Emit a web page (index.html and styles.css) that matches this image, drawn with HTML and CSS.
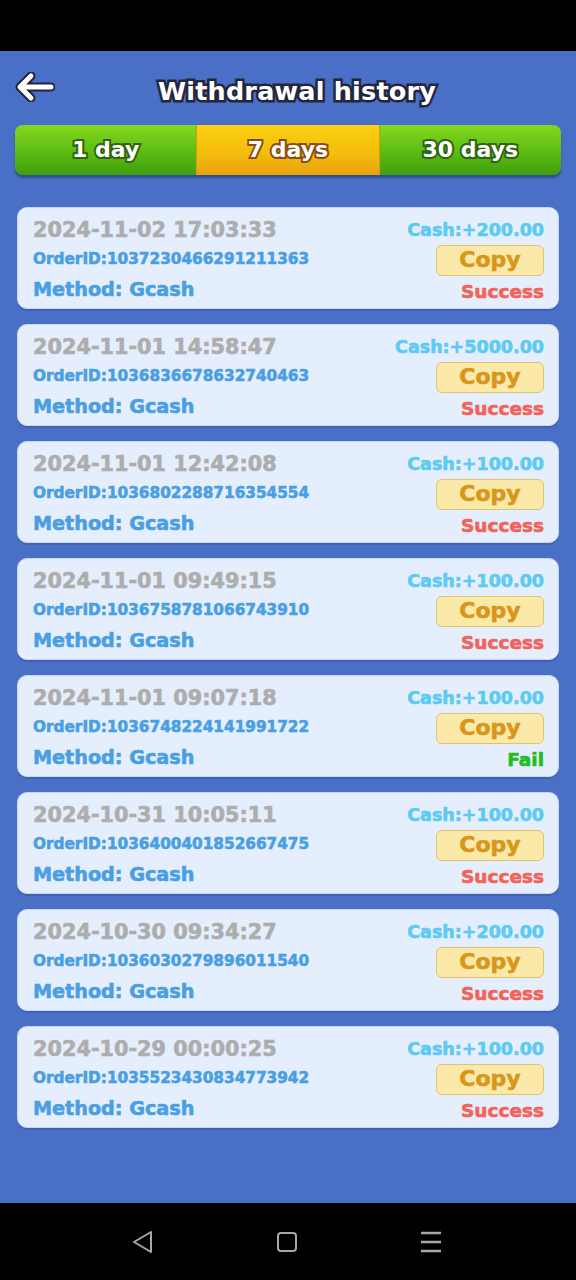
FILE: index.html
```html
<!DOCTYPE html>
<html>
<head>
<meta charset="utf-8">
<title>Withdrawal history</title>
<link rel="stylesheet" href="styles.css">
</head>
<body>
<div class="statusbar"></div>
<div class="screen">
  <div class="header">
    <svg class="back" width="40" height="30" viewBox="0 0 40 30">
      <path d="M36 15H6M16 4L5 15L16 26" fill="none" stroke="#23263d" stroke-width="9" stroke-linecap="round" stroke-linejoin="round"/>
      <path d="M36 15H6M16 4L5 15L16 26" fill="none" stroke="#fff" stroke-width="5" stroke-linecap="round" stroke-linejoin="round"/>
    </svg>
    <div class="title">Withdrawal history</div>
  </div>

  <div class="tabs">
    <div class="tab">1 day</div>
    <div class="tab active">7 days</div>
    <div class="tab">30 days</div>
  </div>

  <div class="list">
    <div class="card">
      <div class="left">
        <div class="date">2024-11-02 17:03:33</div>
        <div class="order">OrderID:1037230466291211363</div>
        <div class="method">Method: Gcash</div>
      </div>
      <div class="right">
        <div class="cash">Cash:+200.00</div>
        <div class="copy">Copy</div>
        <div class="status">Success</div>
      </div>
    </div>
    <div class="card">
      <div class="left">
        <div class="date">2024-11-01 14:58:47</div>
        <div class="order">OrderID:1036836678632740463</div>
        <div class="method">Method: Gcash</div>
      </div>
      <div class="right">
        <div class="cash">Cash:+5000.00</div>
        <div class="copy">Copy</div>
        <div class="status">Success</div>
      </div>
    </div>
    <div class="card">
      <div class="left">
        <div class="date">2024-11-01 12:42:08</div>
        <div class="order">OrderID:1036802288716354554</div>
        <div class="method">Method: Gcash</div>
      </div>
      <div class="right">
        <div class="cash">Cash:+100.00</div>
        <div class="copy">Copy</div>
        <div class="status">Success</div>
      </div>
    </div>
    <div class="card">
      <div class="left">
        <div class="date">2024-11-01 09:49:15</div>
        <div class="order">OrderID:1036758781066743910</div>
        <div class="method">Method: Gcash</div>
      </div>
      <div class="right">
        <div class="cash">Cash:+100.00</div>
        <div class="copy">Copy</div>
        <div class="status">Success</div>
      </div>
    </div>
    <div class="card">
      <div class="left">
        <div class="date">2024-11-01 09:07:18</div>
        <div class="order">OrderID:1036748224141991722</div>
        <div class="method">Method: Gcash</div>
      </div>
      <div class="right">
        <div class="cash">Cash:+100.00</div>
        <div class="copy">Copy</div>
        <div class="status fail">Fail</div>
      </div>
    </div>
    <div class="card">
      <div class="left">
        <div class="date">2024-10-31 10:05:11</div>
        <div class="order">OrderID:1036400401852667475</div>
        <div class="method">Method: Gcash</div>
      </div>
      <div class="right">
        <div class="cash">Cash:+100.00</div>
        <div class="copy">Copy</div>
        <div class="status">Success</div>
      </div>
    </div>
    <div class="card">
      <div class="left">
        <div class="date">2024-10-30 09:34:27</div>
        <div class="order">OrderID:1036030279896011540</div>
        <div class="method">Method: Gcash</div>
      </div>
      <div class="right">
        <div class="cash">Cash:+200.00</div>
        <div class="copy">Copy</div>
        <div class="status">Success</div>
      </div>
    </div>
    <div class="card">
      <div class="left">
        <div class="date">2024-10-29 00:00:25</div>
        <div class="order">OrderID:1035523430834773942</div>
        <div class="method">Method: Gcash</div>
      </div>
      <div class="right">
        <div class="cash">Cash:+100.00</div>
        <div class="copy">Copy</div>
        <div class="status">Success</div>
      </div>
    </div>
  </div>
</div>
<div class="navbar">
  <svg width="24" height="24" viewBox="0 0 24 24"><path d="M20 2L3 12L20 22Z" fill="none" stroke="#a8a8a8" stroke-width="2" stroke-linejoin="round"/></svg>
  <svg width="24" height="24" viewBox="0 0 24 24"><rect x="3" y="3" width="18" height="18" rx="3" fill="none" stroke="#a8a8a8" stroke-width="2"/></svg>
  <svg width="24" height="24" viewBox="0 0 24 24"><path d="M2 3H22M2 12H22M2 21H22" stroke="#a8a8a8" stroke-width="2.5"/></svg>
</div>
</body>
</html>
```

FILE: styles.css
```css
body {
	margin: 0;
	width: 576px;
	height: 1280px;
	display: flex;
	flex-direction: column;
	font-family: "DejaVu Sans", sans-serif;
	font-weight: bold;
	background: #000;
}

.statusbar {
	height: 51px;
	background: #000;
}

.screen {
	height: 1152px;
	background: #4a6fc6;
	display: flex;
	flex-direction: column;
}

.header {
	height: 74px;
	display: flex;
	align-items: center;
	position: relative;
}

.back {
	position: absolute;
	left: 15px;
	top: 21px;
}

.title {
	flex: 1;
	text-align: center;
	padding-left: 18px;
	padding-top: 6px;
	font-size: 25.5px;
	color: #fff;
	-webkit-text-stroke: 5px #23263d;
	paint-order: stroke fill;
	letter-spacing: 0.2px;
}

.tabs {
	margin: 0 15px;
	height: 50px;
	display: flex;
	border-radius: 8px;
	overflow: hidden;
	box-shadow: 0 3px 2px rgba(20, 40, 90, 0.45);
}

.tab {
	flex: 1;
	display: flex;
	align-items: center;
	justify-content: center;
	font-size: 22px;
	color: #fff;
	background: linear-gradient(#84d81e, #5cbb12 55%, #3f9e0c);
	-webkit-text-stroke: 4px #2f6410;
	paint-order: stroke fill;
	padding-bottom: 2px;
}

.tab.active {
	background: linear-gradient(#fbd012, #f5bd0d 55%, #e9a20a);
	-webkit-text-stroke: 4px #8a4e12;
	border-left: 1px solid #d69a0c;
	border-right: 1px solid #d69a0c;
}

.list {
	margin-top: 32px;
	padding: 0 17px;
	display: flex;
	flex-direction: column;
	gap: 15px;
}

.card {
	height: 102px;
	box-sizing: border-box;
	background: #e5eefc;
	border: 1px solid #c6d6f3;
	border-radius: 10px;
	box-shadow: 0 2px 0 #3f62b6;
	padding: 9px 14px 0 15px;
	display: flex;
	justify-content: space-between;
}

.left, .right {
	display: flex;
	flex-direction: column;
}

.right {
	align-items: flex-end;
}

.date, .order, .method, .cash, .copy, .status {
	-webkit-text-stroke: 0.6px currentColor;
}

.date {
	font-size: 20.8px;
	line-height: 26px;
	color: #adadad;
}

.order {
	font-size: 15.3px;
	line-height: 32px;
	color: #4a9fe2;
}

.method {
	font-size: 19.2px;
	line-height: 30px;
	color: #4a9fe2;
}

.cash {
	font-size: 17.5px;
	line-height: 24px;
	color: #5ccaf2;
	margin-top: 1px;
}

.copy {
	margin-top: 3px;
	width: 108px;
	height: 31px;
	box-sizing: border-box;
	background: #fae9a9;
	border: 1px solid #e2c26c;
	border-radius: 6px;
	color: #d9961a;
	font-size: 22px;
	display: flex;
	align-items: center;
	justify-content: center;
	padding-bottom: 2px;
}

.status {
	font-size: 18.5px;
	line-height: 32px;
	color: #f26358;
}

.status.fail {
	color: #20be20;
}

.navbar {
	height: 77px;
	background: #000;
	display: flex;
	align-items: center;
	justify-content: space-between;
	padding: 0 133px 0 131px;
}
```
